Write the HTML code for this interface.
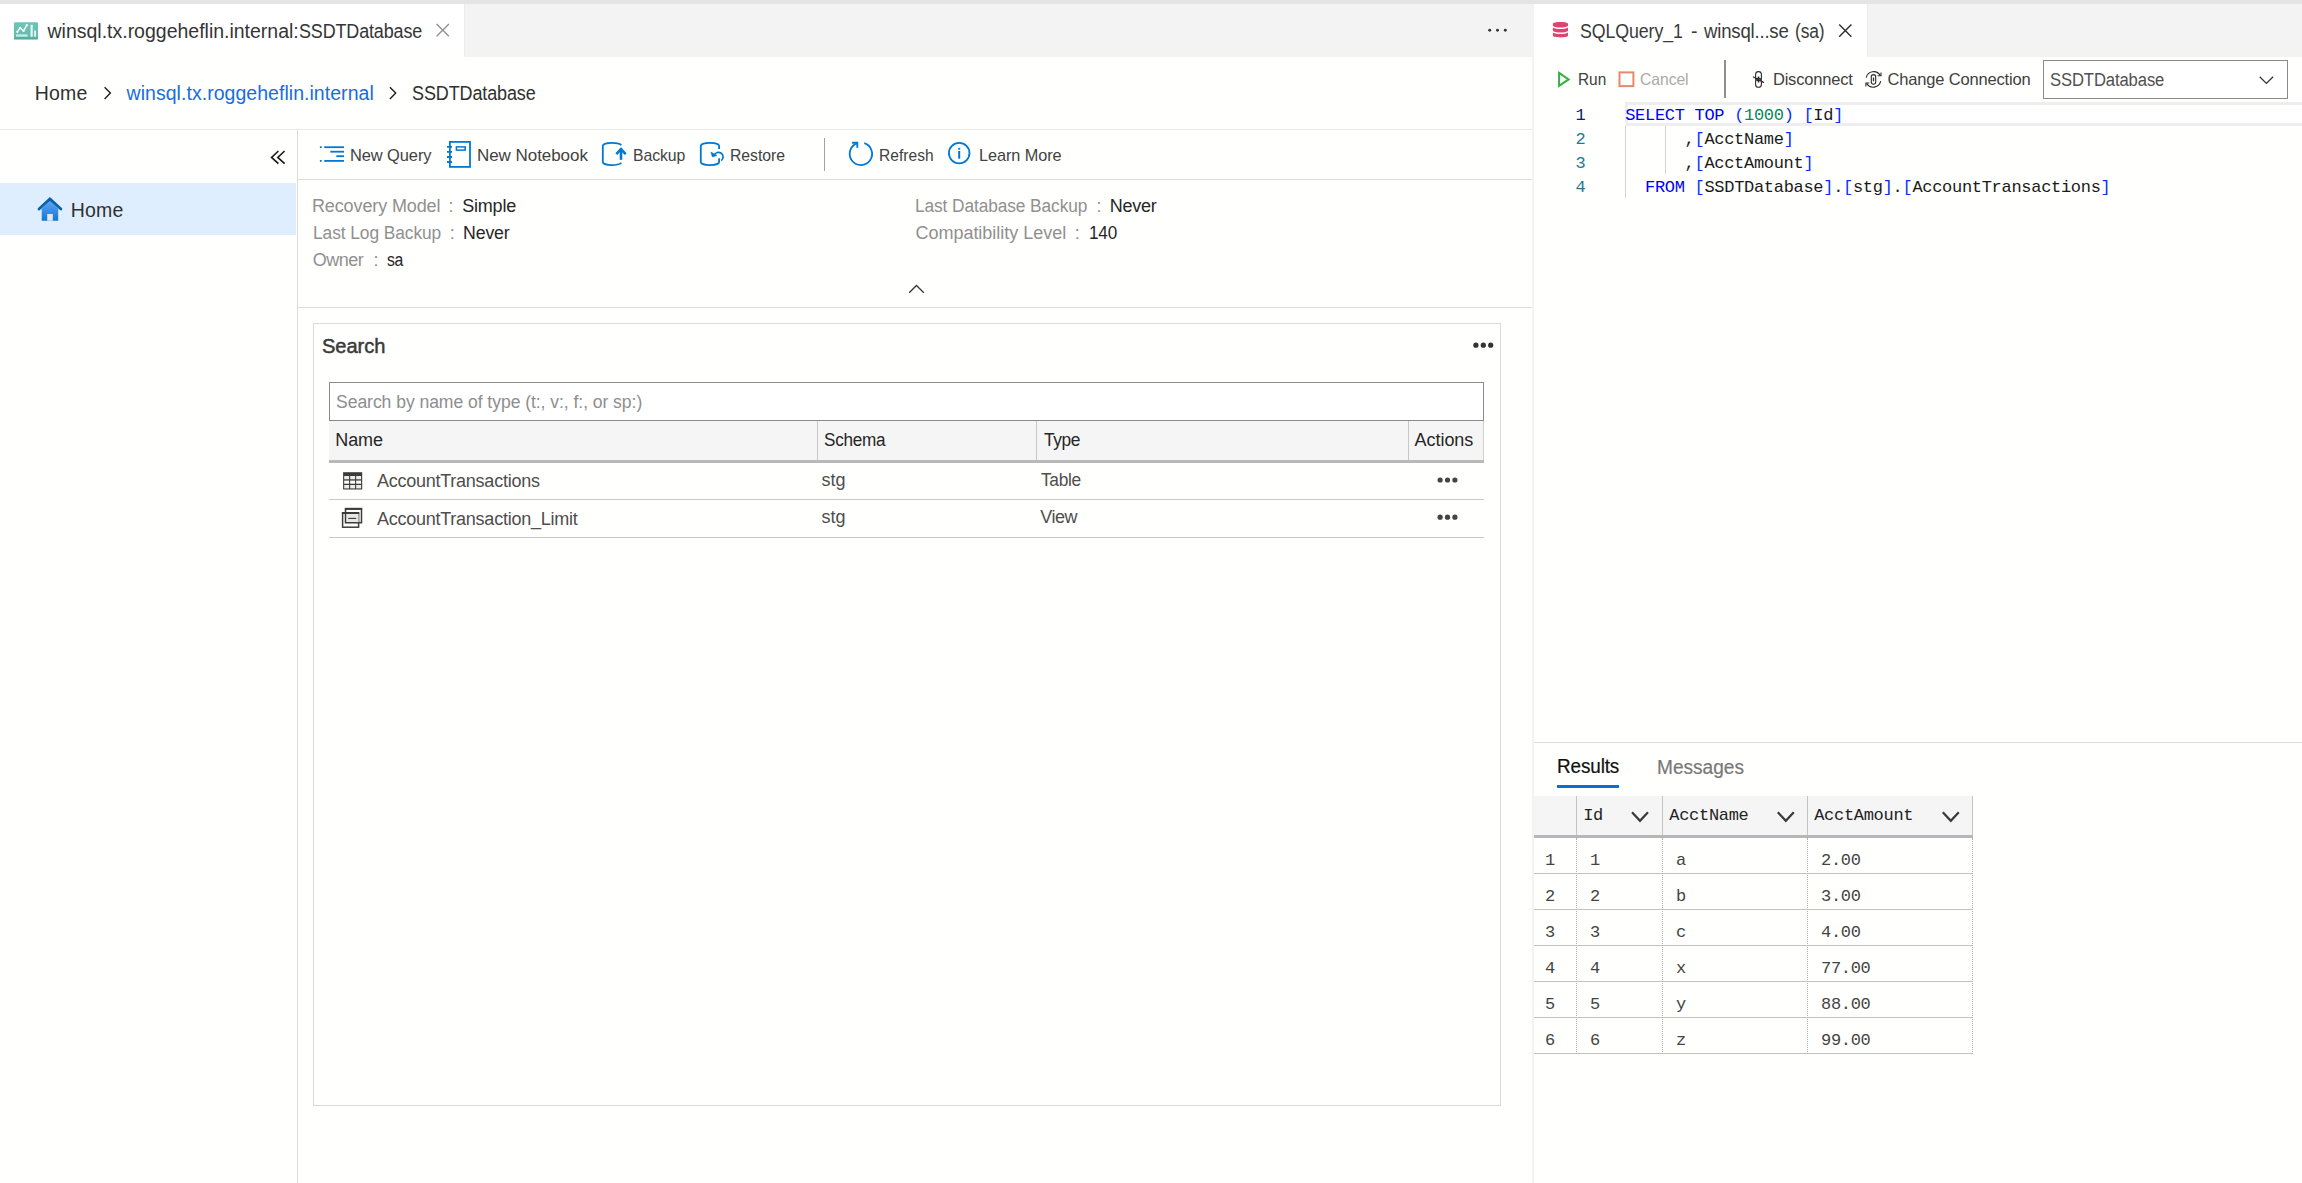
<!DOCTYPE html>
<html lang="en">
<head>
<meta charset="utf-8">
<title>Azure Data Studio - SSDTDatabase</title>
<style>
html,body{margin:0;padding:0;width:2302px;height:1183px;overflow:hidden;background:#fffffd;}
body{position:relative;font-family:"Liberation Sans",sans-serif;color:#333;}
.b{position:absolute;box-sizing:border-box;}
.t{position:absolute;line-height:0;white-space:nowrap;}
.m{position:absolute;line-height:0;white-space:pre;font-family:"Liberation Mono",monospace;font-size:17px;letter-spacing:-0.3px;color:#222;}
.kw{color:#0000ff}.br{color:#0431fa}.nu{color:#098658}.id{color:#1a1a1a}
.ln{color:#237893}

.sb{-webkit-text-stroke:0.2px currentColor}
.sb2{-webkit-text-stroke:0.5px currentColor}
svg.ov{position:absolute;left:0;top:0;}
</style>
</head>
<body>
<!-- window top strip -->
<div class="b" style="left:0;top:0;width:2302px;height:4px;background:#e4e4e4"></div>

<!-- ================= LEFT EDITOR GROUP : database dashboard ================= -->
<section id="group-dashboard">
  <header id="tabs-left-wrap">
    <div class="b" id="tabs-left" style="left:0;top:4px;width:1534px;height:53px;background:#f3f3f3"></div>
    <div class="b" id="tab-dashboard" style="left:0;top:4px;width:465px;height:53px;background:#ffffff;border-right:1px solid #ececec"></div>
    <span class="run"><span class="t" style="left:47.52px;top:31.00px;font-size:19.5px;color:#353535;letter-spacing:-0.007px;">winsql.tx.roggeheflin.internal:</span><span class="t" style="left:298.57px;top:31.00px;font-size:19.5px;color:#353535;transform:scaleX(0.9210);transform-origin:0 50%;letter-spacing:-0.151px;">SSDTDatabase</span></span>
  </header>

  <nav id="breadcrumb">
    <span class="t" style="left:34.70px;top:93.00px;font-size:19.5px;color:#303030;letter-spacing:0.247px;">Home</span>
    <span class="t" style="left:126.56px;top:93.00px;font-size:19.5px;color:#1a6ce0;letter-spacing:0.039px;">winsql.tx.roggeheflin.internal</span>
    <span class="t" style="left:411.90px;top:93.00px;font-size:19.5px;color:#303030;transform:scaleX(0.9230);transform-origin:0 50%;letter-spacing:-0.130px;">SSDTDatabase</span>
    <div class="b" id="breadcrumb-border" style="left:0;top:129px;width:1532px;height:1px;background:#ebebeb"></div>
  </nav>

  <aside id="dashboard-nav">
    <div class="b" id="nav-border" style="left:297px;top:130px;width:1px;height:1053px;background:#dcdcdc"></div>
    <div class="b" id="nav-home" style="left:0;top:183px;width:296px;height:52px;background:#dfeefe"></div>
    <span class="t" style="left:70.70px;top:210.00px;font-size:19.5px;color:#303030;letter-spacing:0.247px;">Home</span>
  </aside>

  <div id="dashboard-toolbar">
    <span class="t" style="left:350.40px;top:156.00px;font-size:17px;color:#424242;transform:scaleX(0.9670);transform-origin:0 50%;letter-spacing:-0.096px;">New Query</span>
    <span class="t" style="left:476.99px;top:156.00px;font-size:17px;color:#424242;letter-spacing:-0.052px;">New Notebook</span>
    <span class="t" style="left:633.17px;top:156.00px;font-size:17px;color:#424242;transform:scaleX(0.9300);transform-origin:0 50%;letter-spacing:-0.092px;">Backup</span>
    <span class="t" style="left:730.23px;top:156.00px;font-size:17px;color:#424242;transform:scaleX(0.9280);transform-origin:0 50%;letter-spacing:-0.044px;">Restore</span>
    <span class="t" style="left:879.19px;top:156.00px;font-size:17px;color:#424242;transform:scaleX(0.9150);transform-origin:0 50%;letter-spacing:0.041px;">Refresh</span>
    <span class="t" style="left:979.25px;top:156.00px;font-size:17px;color:#424242;transform:scaleX(0.9580);transform-origin:0 50%;letter-spacing:-0.075px;">Learn More</span>
    <div class="b" style="left:298px;top:179px;width:1234px;height:1px;background:#dedede"></div>
  </div>

  <div id="dashboard-properties">
    <span class="run"><span class="t" style="left:311.96px;top:206.00px;font-size:18px;color:#909090;letter-spacing:-0.119px;">Recovery Model </span><span class="t" style="left:448.56px;top:206.00px;font-size:18px;color:#909090;letter-spacing:0.000px;">: </span><span class="t" style="left:462.25px;top:206.00px;font-size:18px;color:#262626;letter-spacing:-0.220px;">Simple</span></span>
    <span class="run"><span class="t" style="left:312.89px;top:233.00px;font-size:18px;color:#909090;transform:scaleX(0.9640);transform-origin:0 50%;letter-spacing:-0.079px;">Last Log Backup </span><span class="t" style="left:449.72px;top:233.00px;font-size:18px;color:#909090;letter-spacing:0.000px;">: </span><span class="t" style="left:463.36px;top:233.00px;font-size:18px;color:#262626;transform:scaleX(0.9840);transform-origin:0 50%;letter-spacing:-0.127px;">Never</span></span>
    <span class="run"><span class="t" style="left:312.73px;top:260.00px;font-size:18px;color:#909090;letter-spacing:-0.486px;">Owner </span><span class="t" style="left:373.56px;top:260.00px;font-size:18px;color:#909090;letter-spacing:0.000px;">: </span><span class="t" style="left:387.26px;top:260.00px;font-size:18px;color:#262626;transform:scaleX(0.8780);transform-origin:0 50%;letter-spacing:-0.600px;">sa</span></span>
    <span class="run"><span class="t" style="left:915.13px;top:206.00px;font-size:18px;color:#909090;transform:scaleX(0.9610);transform-origin:0 50%;letter-spacing:-0.092px;">Last Database Backup </span><span class="t" style="left:1096.51px;top:206.00px;font-size:18px;color:#909090;letter-spacing:0.000px;">: </span><span class="t" style="left:1109.73px;top:206.00px;font-size:18px;color:#262626;letter-spacing:-0.237px;">Never</span></span>
    <span class="run"><span class="t" style="left:915.45px;top:233.00px;font-size:18px;color:#909090;letter-spacing:-0.017px;">Compatibility Level </span><span class="t" style="left:1074.72px;top:233.00px;font-size:18px;color:#909090;letter-spacing:0.000px;">: </span><span class="t" style="left:1089.07px;top:233.00px;font-size:18px;color:#262626;transform:scaleX(0.9500);transform-origin:0 50%;letter-spacing:-0.181px;">140</span></span>
    <div class="b" style="left:298px;top:307px;width:1234px;height:1px;background:#dedede"></div>
  </div>

  <section id="search-widget">
    <div class="b" id="widget" style="left:313px;top:323px;width:1188px;height:783px;border:1px solid #dadada"></div>
    <div class="b" id="search-input" style="left:329px;top:382px;width:1155px;height:39px;border:1px solid #8a8a8a;background:#fff"></div>
    <div class="b" id="grid-head" style="left:329px;top:421px;width:1155px;height:39px;background:#f5f5f5;border-right:1px solid #d0d0d0"></div>
    <div class="b" style="left:329px;top:460px;width:1155px;height:3px;background:#b9b9b9"></div>
    <div class="b" style="left:817px;top:421px;width:1px;height:39px;background:#c8c8c8"></div>
    <div class="b" style="left:1036px;top:421px;width:1px;height:39px;background:#c8c8c8"></div>
    <div class="b" style="left:1408px;top:421px;width:1px;height:39px;background:#c8c8c8"></div>
    <div class="b" style="left:329px;top:499px;width:1155px;height:1px;background:#c9c9c9"></div>
    <div class="b" style="left:329px;top:537px;width:1155px;height:1px;background:#c9c9c9"></div>
    <span class="t sb2" style="left:322.28px;top:346.00px;font-size:21px;color:#3a3a3a;transform:scaleX(0.9570);transform-origin:0 50%;letter-spacing:-0.077px;">Search</span>
    <span class="t" style="left:336.47px;top:402.00px;font-size:18px;color:#8e8e8e;transform:scaleX(0.9760);transform-origin:0 50%;letter-spacing:-0.056px;">Search by name of type (t:, v:, f:, or sp:)</span>
    <span class="t" style="left:335.25px;top:440.00px;font-size:18px;color:#262626;letter-spacing:-0.070px;">Name</span>
    <span class="t" style="left:823.97px;top:440.00px;font-size:18px;color:#262626;transform:scaleX(0.9520);transform-origin:0 50%;letter-spacing:-0.264px;">Schema</span>
    <span class="t" style="left:1043.69px;top:440.00px;font-size:18px;color:#262626;transform:scaleX(0.9640);transform-origin:0 50%;letter-spacing:-0.431px;">Type</span>
    <span class="t" style="left:1414.59px;top:440.00px;font-size:18px;color:#262626;letter-spacing:-0.046px;">Actions</span>
    <span class="t" style="left:376.98px;top:481.00px;font-size:18px;color:#4e4e4e;letter-spacing:-0.248px;">AccountTransactions</span>
    <span class="t" style="left:821.46px;top:480.00px;font-size:18px;color:#4e4e4e;letter-spacing:0.034px;">stg</span>
    <span class="t" style="left:1040.55px;top:480.00px;font-size:18px;color:#4e4e4e;transform:scaleX(0.9630);transform-origin:0 50%;letter-spacing:-0.325px;">Table</span>
    <span class="t" style="left:376.90px;top:519.00px;font-size:18px;color:#4e4e4e;letter-spacing:-0.242px;">AccountTransaction_Limit</span>
    <span class="t" style="left:821.46px;top:517.00px;font-size:18px;color:#4e4e4e;letter-spacing:0.034px;">stg</span>
    <span class="t" style="left:1040.29px;top:517.00px;font-size:18px;color:#4e4e4e;letter-spacing:-0.463px;">View</span>
  </section>
</section>

<!-- splitter between editor groups -->
<div class="b" id="pane-sep" style="left:1532px;top:57px;width:2px;height:1126px;background:#f3f3f3"></div>

<!-- ================= RIGHT EDITOR GROUP : query editor ================= -->
<section id="group-query">
  <header id="tabs-right-wrap">
    <div class="b" id="tabs-right" style="left:1534px;top:4px;width:768px;height:53px;background:#f3f3f3"></div>
    <div class="b" id="tab-query" style="left:1534px;top:4px;width:334px;height:53px;background:#ffffff;border-right:1px solid #ececec"></div>
    <span class="run"><span class="t" style="left:1580.36px;top:31.00px;font-size:19.5px;color:#3a3a3a;transform:scaleX(0.9110);transform-origin:0 50%;letter-spacing:-0.100px;">SQLQuery_1 </span><span class="t" style="left:1691.01px;top:31.00px;font-size:19.5px;color:#3a3a3a;letter-spacing:0.000px;">- </span><span class="t" style="left:1703.64px;top:31.00px;font-size:19.5px;color:#3a3a3a;transform:scaleX(0.9540);transform-origin:0 50%;letter-spacing:-0.215px;">winsql...se </span><span class="t" style="left:1795.43px;top:31.00px;font-size:19.5px;color:#3a3a3a;transform:scaleX(0.8930);transform-origin:0 50%;letter-spacing:-0.126px;">(sa)</span></span>
  </header>

  <div id="query-toolbar">
    <div class="b" style="left:1724px;top:60px;width:2px;height:38px;background:#8f8f8f"></div>
    <div class="b" id="db-select" style="left:2043px;top:60px;width:245px;height:39px;border:1px solid #8a8a8a;background:#fff"></div>
    <span class="t" style="left:1577.83px;top:79.00px;font-size:16.5px;color:#404040;transform:scaleX(0.9330);transform-origin:0 50%;letter-spacing:-0.013px;">Run</span>
    <span class="t" style="left:1639.59px;top:79.00px;font-size:16.5px;color:#ababab;transform:scaleX(0.9510);transform-origin:0 50%;letter-spacing:-0.053px;">Cancel</span>
    <span class="t" style="left:1772.93px;top:79.00px;font-size:16.5px;color:#404040;letter-spacing:-0.197px;">Disconnect</span>
    <span class="t" style="left:1887.62px;top:79.00px;font-size:16.5px;color:#404040;letter-spacing:-0.176px;">Change Connection</span>
    <span class="t" style="left:2050.31px;top:80.00px;font-size:18px;color:#505050;transform:scaleX(0.9240);transform-origin:0 50%;letter-spacing:-0.119px;">SSDTDatabase</span>
  </div>

  <div id="code-editor">
    <!-- current line highlight -->
    <div class="b" style="left:1625px;top:102px;width:677px;height:24px;border:3px solid #eeeeee;border-right:0;background:#fff"></div>
    <!-- indent guides -->
    <div class="b" style="left:1625px;top:126px;width:1px;height:72px;background:#d3d3d3"></div>
    <div class="b" style="left:1665px;top:126px;width:1px;height:48px;background:#d3d3d3"></div>
    <span class="m ln" style="left:1575.5px;top:116px;color:#0b216f">1</span>
    <span class="m ln" style="left:1575.5px;top:140px">2</span>
    <span class="m ln" style="left:1575.5px;top:164px">3</span>
    <span class="m ln" style="left:1575.5px;top:188px">4</span>
    <span class="m" style="left:1625.2px;top:116px"><span class="kw">SELECT TOP</span> <span class="br">(</span><span class="nu">1000</span><span class="br">)</span> <span class="br">[</span><span class="id">Id</span><span class="br">]</span></span>
    <span class="m" style="left:1625.2px;top:140px">      ,<span class="br">[</span><span class="id">AcctName</span><span class="br">]</span></span>
    <span class="m" style="left:1625.2px;top:164px">      ,<span class="br">[</span><span class="id">AcctAmount</span><span class="br">]</span></span>
    <span class="m" style="left:1625.2px;top:188px">  <span class="kw">FROM</span> <span class="br">[</span><span class="id">SSDTDatabase</span><span class="br">]</span>.<span class="br">[</span><span class="id">stg</span><span class="br">]</span>.<span class="br">[</span><span class="id">AccountTransactions</span><span class="br">]</span></span>
  </div>

  <section id="results-panel">
    <div class="b" style="left:1534px;top:742px;width:768px;height:1px;background:#dcdcdc"></div>
    <span class="t sb" style="left:1557.05px;top:766.00px;font-size:19.5px;color:#111;transform:scaleX(0.9700);transform-origin:0 50%;letter-spacing:-0.129px;">Results</span>
    <span class="t sb" style="left:1657.08px;top:767.00px;font-size:19.5px;color:#787878;transform:scaleX(0.9790);transform-origin:0 50%;letter-spacing:0.001px;">Messages</span>
    <div class="b" style="left:1557px;top:785px;width:62px;height:3px;background:#0b6fd1"></div>
    <!-- grid header -->
    <div class="b" id="res-head" style="left:1534px;top:796px;width:439px;height:39px;background:#f5f5f5"></div>
    <div class="b" style="left:1534px;top:835px;width:439px;height:3px;background:#b7b7b7"></div>
    <div class="b" style="left:1576px;top:796px;width:1px;height:39px;background:#c4c4c4"></div>
    <div class="b" style="left:1662px;top:796px;width:1px;height:39px;background:#c4c4c4"></div>
    <div class="b" style="left:1807px;top:796px;width:1px;height:39px;background:#c4c4c4"></div>
    <div class="b" style="left:1972px;top:796px;width:1px;height:39px;background:#c4c4c4"></div>
    <span class="m" style="left:1583.2px;top:816px">Id</span>
    <span class="m" style="left:1669.3px;top:816px">AcctName</span>
    <span class="m" style="left:1814.2px;top:816px">AcctAmount</span>
    <!-- row lines -->
    <div class="b" style="left:1534px;top:873px;width:439px;height:1px;background:#c2c2c2"></div>
    <div class="b" style="left:1534px;top:909px;width:439px;height:1px;background:#c2c2c2"></div>
    <div class="b" style="left:1534px;top:945px;width:439px;height:1px;background:#c2c2c2"></div>
    <div class="b" style="left:1534px;top:981px;width:439px;height:1px;background:#c2c2c2"></div>
    <div class="b" style="left:1534px;top:1017px;width:439px;height:1px;background:#c2c2c2"></div>
    <div class="b" style="left:1534px;top:1053px;width:439px;height:1px;background:#c2c2c2"></div>
    <!-- dotted column lines -->
    <div class="b" style="left:1576px;top:838px;width:0;height:216px;border-left:1px dotted #b0b0b0"></div>
    <div class="b" style="left:1662px;top:838px;width:0;height:216px;border-left:1px dotted #b0b0b0"></div>
    <div class="b" style="left:1807px;top:838px;width:0;height:216px;border-left:1px dotted #b0b0b0"></div>
    <div class="b" style="left:1972px;top:838px;width:0;height:216px;border-left:1px dotted #b0b0b0"></div>
    <!-- results rows -->
    <span class="m" style="left:1545.1px;top:861px;color:#444">1</span>
    <span class="m" style="left:1589.9px;top:861px;color:#444">1</span>
    <span class="m" style="left:1675.9px;top:861px;color:#444">a</span>
    <span class="m" style="left:1821.0px;top:861px;color:#444">2.00</span>
    <span class="m" style="left:1545.1px;top:897px;color:#444">2</span>
    <span class="m" style="left:1589.9px;top:897px;color:#444">2</span>
    <span class="m" style="left:1675.9px;top:897px;color:#444">b</span>
    <span class="m" style="left:1821.0px;top:897px;color:#444">3.00</span>
    <span class="m" style="left:1545.1px;top:933px;color:#444">3</span>
    <span class="m" style="left:1589.9px;top:933px;color:#444">3</span>
    <span class="m" style="left:1675.9px;top:933px;color:#444">c</span>
    <span class="m" style="left:1821.0px;top:933px;color:#444">4.00</span>
    <span class="m" style="left:1545.1px;top:969px;color:#444">4</span>
    <span class="m" style="left:1589.9px;top:969px;color:#444">4</span>
    <span class="m" style="left:1675.9px;top:969px;color:#444">x</span>
    <span class="m" style="left:1821.0px;top:969px;color:#444">77.00</span>
    <span class="m" style="left:1545.1px;top:1005px;color:#444">5</span>
    <span class="m" style="left:1589.9px;top:1005px;color:#444">5</span>
    <span class="m" style="left:1675.9px;top:1005px;color:#444">y</span>
    <span class="m" style="left:1821.0px;top:1005px;color:#444">88.00</span>
    <span class="m" style="left:1545.1px;top:1041px;color:#444">6</span>
    <span class="m" style="left:1589.9px;top:1041px;color:#444">6</span>
    <span class="m" style="left:1675.9px;top:1041px;color:#444">z</span>
    <span class="m" style="left:1821.0px;top:1041px;color:#444">99.00</span>
  </section>
</section>

<!-- ============ ICONS (vector overlay, page coordinates) ============ -->
<svg class="ov" width="2302" height="1183" viewBox="0 0 2302 1183" fill="none">
<defs>
<linearGradient id="gDash" x1="0" y1="0" x2="0" y2="1"><stop offset="0" stop-color="#6cc6b8"/><stop offset="0.8" stop-color="#62bdae"/><stop offset="1" stop-color="#4aa594"/></linearGradient>
<linearGradient id="gHome" x1="0" y1="0" x2="0" y2="1"><stop offset="0" stop-color="#66a5f0"/><stop offset="1" stop-color="#0f78d6"/></linearGradient>
</defs>

<!-- dashboard tab icon -->
<g id="ico-dashboard">
<rect x="14" y="22.3" width="24" height="17.3" rx="1.2" fill="url(#gDash)"/>
<polyline points="17.3,31.8 20.1,27.8 23.6,31 26.8,25.2" stroke="#fff" stroke-width="1.4" stroke-linejoin="round" stroke-linecap="round"/>
<circle cx="17.3" cy="31.8" r="1.1" fill="#fff"/><circle cx="20.1" cy="27.8" r="1.1" fill="#fff"/><circle cx="23.6" cy="31" r="1.1" fill="#fff"/><circle cx="26.8" cy="25.2" r="1.1" fill="#fff"/>
<rect x="16" y="34.3" width="11.6" height="2.4" fill="#fff" fill-opacity="0.65"/>
<rect x="30.6" y="24.8" width="2.1" height="12" fill="#fff" fill-opacity="0.9"/>
<rect x="34.2" y="30.4" width="1.7" height="6.4" fill="#fff" fill-opacity="0.9"/>
</g>
<!-- tab close buttons -->
<path d="M436.6 23.9 L448.9 36.2 M448.9 23.9 L436.6 36.2" stroke="#929292" stroke-width="1.4"/>
<path d="M1839.2 24.6 L1851.4 36.8 M1851.4 24.6 L1839.2 36.8" stroke="#2e2e2e" stroke-width="1.4"/>
<!-- left group more (...) -->
<g fill="#333"><circle cx="1489.7" cy="30.2" r="1.45"/><circle cx="1497.5" cy="30.2" r="1.45"/><circle cx="1505.3" cy="30.2" r="1.45"/></g>
<!-- breadcrumb chevrons -->
<polyline points="104.6,87.3 110.4,93.1 104.6,98.9" stroke="#1e1e1e" stroke-width="1.4"/>
<polyline points="389.9,87.3 395.7,93.1 389.9,98.9" stroke="#1e1e1e" stroke-width="1.4"/>
<!-- collapse nav -->
<polyline points="278.4,151 271.6,157.4 278.4,163.7" stroke="#1e1e1e" stroke-width="1.7"/>
<polyline points="284.6,151 277.8,157.4 284.6,163.7" stroke="#1e1e1e" stroke-width="1.7"/>
<!-- home icon -->
<g id="ico-home">
<path d="M41.7 208.8 L49.9 200.2 L58.2 208.8 L58.2 220.7 L41.7 220.7 Z" fill="url(#gHome)"/>
<rect x="47.2" y="214" width="5.6" height="6.7" fill="#e6e6e6"/>
<polyline points="39,209 49.9,199 60.9,209" stroke="#0563ae" stroke-width="2.8" stroke-linejoin="miter" stroke-linecap="round"/>
</g>

<!-- toolbar: New Query -->
<g id="ico-newquery" fill="#0078d4">
<rect x="319.9" y="146.3" width="1.8" height="1.8"/><rect x="324.2" y="146.3" width="19.8" height="1.8"/>
<rect x="330.3" y="150.8" width="13.7" height="1.8"/>
<rect x="336.3" y="155.3" width="7.7" height="1.8"/>
<rect x="319.9" y="160" width="1.8" height="1.8"/><rect x="324.2" y="160" width="19.8" height="1.8"/>
</g>
<!-- toolbar: New Notebook -->
<g id="ico-notebook" stroke="#0078d4" stroke-width="1.8">
<rect x="449.9" y="141.9" width="20.1" height="25"/>
<path d="M447 146.8 H452 M447 151.8 H452 M447 157 H452 M447 162 H452"/>
<rect x="456.4" y="146.9" width="8.8" height="3.2" stroke-width="1.5"/>
</g>
<!-- toolbar: Backup -->
<g id="ico-backup" stroke="#0078d4" stroke-width="1.8" stroke-linecap="butt">
<path d="M621.4 144.9 C619.5 143.6 615.8 142.8 612 142.8 C606.9 142.8 602.8 144.2 602.8 146 L602.8 161.9 C602.8 163.7 606.9 165.1 612 165.1 C615.8 165.1 619.5 164.3 621.4 162.9"/>
<path d="M621 159.8 L621 148.6" stroke-width="2.6"/>
<polyline points="616.3,154.2 621,149.2 625.7,154.2" stroke-width="2.6" stroke-linejoin="miter"/>
</g>
<!-- toolbar: Restore -->
<g id="ico-restore" stroke="#0078d4" stroke-width="1.8">
<path d="M719.1 148.9 L719.1 146 C719.1 144.2 715 142.8 709.9 142.8 C704.8 142.8 700.8 144.2 700.8 146 L700.8 161.9 C700.8 163.7 704.8 165.1 709.9 165.1 C715 165.1 719.1 163.7 719.1 161.9 L719.1 158.2"/>
<path d="M714.2 155.2 A4.6 4.6 0 1 1 721.2 160.6" stroke-width="1.7"/>
<path d="M710.9 152.1 L712.4 157 L716.9 155.4 Z" fill="#0078d4" stroke-width="0.6"/>
</g>
<!-- toolbar separator -->
<rect x="824" y="138" width="1" height="33" fill="#a3a3a3"/>
<!-- toolbar: Refresh -->
<g id="ico-refresh" stroke="#0078d4" stroke-width="1.8">
<path d="M864.3 143.2 A11.2 11.2 0 1 1 856.9 143.4"/>
<polyline points="852,142.7 857.3,142.7 857.3,147.8" stroke-width="1.9"/>
</g>
<!-- toolbar: Learn More -->
<g id="ico-info">
<circle cx="959.2" cy="153.1" r="10.3" stroke="#0078d4" stroke-width="1.8"/>
<rect x="958.2" y="147.9" width="2" height="1.8" fill="#0078d4"/><rect x="958.2" y="151" width="2" height="7.7" fill="#0078d4"/>
</g>
<!-- properties collapse chevron -->
<polyline points="909.2,292.8 916.5,285.5 923.8,292.8" stroke="#333" stroke-width="1.3"/>
<!-- widget menu (...) -->
<g fill="#333"><circle cx="1475.9" cy="345.2" r="2.6"/><circle cx="1483.3" cy="345.2" r="2.6"/><circle cx="1490.7" cy="345.2" r="2.6"/></g>
<!-- row actions (...) -->
<g fill="#444"><circle cx="1440.1" cy="480" r="2.6"/><circle cx="1447.5" cy="480" r="2.6"/><circle cx="1454.9" cy="480" r="2.6"/>
<circle cx="1440.1" cy="517.2" r="2.6"/><circle cx="1447.5" cy="517.2" r="2.6"/><circle cx="1454.9" cy="517.2" r="2.6"/></g>
<!-- table icon -->
<g id="ico-table">
<rect x="343.1" y="472.2" width="19.1" height="17.3" fill="#3c3c3c"/>
<g fill="#ededed">
<rect x="344.2" y="476" width="4.9" height="3.3"/><rect x="350.2" y="476" width="4.9" height="3.3"/><rect x="356.2" y="476" width="4.9" height="3.3"/>
<rect x="344.2" y="480.6" width="4.9" height="3.1" fill="#fff"/><rect x="350.2" y="480.6" width="4.9" height="3.1" fill="#fff"/><rect x="356.2" y="480.6" width="4.9" height="3.1" fill="#fff"/>
<rect x="344.2" y="485" width="4.9" height="3.4"/><rect x="350.2" y="485" width="4.9" height="3.4"/><rect x="356.2" y="485" width="4.9" height="3.4"/>
</g></g>
<!-- view icon -->
<g id="ico-view" stroke="#3c3c3c" stroke-width="1.5">
<rect x="345.5" y="509" width="16" height="13.7" fill="#fffffd"/>
<rect x="344.9" y="507.8" width="17.3" height="2" fill="#3c3c3c" stroke="none"/>
<rect x="342.6" y="513.2" width="16" height="14" fill="#fffffd"/>
<rect x="341.9" y="512" width="17.3" height="2" fill="#3c3c3c" stroke="none"/>
<rect x="346.2" y="514" width="12.4" height="8.7" fill="#e8e8e8" stroke="none"/>
<path d="M345.5 514 V522.7 H358.6" />
<path d="M348.2 518.4 H356.2" stroke-width="1.1"/>
</g>

<!-- query tab icon (database) -->
<g id="ico-db" fill="#df4470">
<path d="M1552.9 23.9 C1552.9 22.6 1556.3 22 1560.5 22 C1564.6 22 1568 22.6 1568 23.9 L1568 26 C1566 27.2 1563.4 27.6 1560.5 27.6 C1557.5 27.6 1554.9 27.2 1552.9 26 Z"/>
<path d="M1552.9 27.4 C1554.9 28.6 1557.5 29 1560.5 29 C1563.4 29 1566 28.6 1568 27.4 L1568 31 C1566 32.1 1563.4 32.5 1560.5 32.5 C1557.5 32.5 1554.9 32.1 1552.9 31 Z"/>
<path d="M1552.9 32.4 C1554.9 33.6 1557.5 34 1560.5 34 C1563.4 34 1566 33.6 1568 32.4 L1568 35.5 C1568 36.7 1564.6 37.4 1560.5 37.4 C1556.3 37.4 1552.9 36.7 1552.9 35.5 Z"/>
</g>
<!-- Run -->
<path d="M1559.1 72.9 L1568.6 79.4 L1559.1 85.9 Z" stroke="#33b044" stroke-width="2" stroke-linejoin="miter"/>
<!-- Cancel -->
<rect x="1619.5" y="72.4" width="13.9" height="13.7" stroke="#e8876d" stroke-width="2"/>
<!-- Disconnect -->
<g id="ico-disconnect" stroke="#2c2c2c" stroke-width="1.1">
<rect x="1755.6" y="71.6" width="5.8" height="9" rx="2.9"/>
<rect x="1755.6" y="78.3" width="5.8" height="9" rx="2.9"/>
<path d="M1753 76.8 L1764 82.6" stroke-width="1.2"/>
<path d="M1758.5 76.5 V82.5" stroke-width="1.6"/>
</g>
<!-- Change Connection -->
<g id="ico-changeconn" stroke="#2c2c2c" stroke-width="1.1">
<path d="M1866.2 77.6 A7.6 7.6 0 0 1 1880.2 75.4"/>
<path d="M1880.7 81.2 A7.6 7.6 0 0 1 1866.7 83.4"/>
<polyline points="1877.6,75.8 1881,75.8 1881,72.4"/>
<polyline points="1869.3,83 1865.9,83 1865.9,86.4"/>
<rect x="1871.3" y="74.6" width="4.4" height="9.6" rx="2.2"/>
<path d="M1873.5 77.6 V81.2" stroke-width="1.3"/>
</g>
<!-- db select chevron -->
<polyline points="2259.7,76.7 2266.4,83.4 2273.1,76.7" stroke="#333" stroke-width="1.3"/>
<!-- results column header chevrons -->
<g stroke="#3a3a3a" stroke-width="2.2">
<polyline points="1632,812.3 1640,820.8 1648,812.3"/>
<polyline points="1777.8,812.3 1785.8,820.8 1793.8,812.3"/>
<polyline points="1942.8,812.3 1950.8,820.8 1958.8,812.3"/>
</g>
</svg>

</body>
</html>
